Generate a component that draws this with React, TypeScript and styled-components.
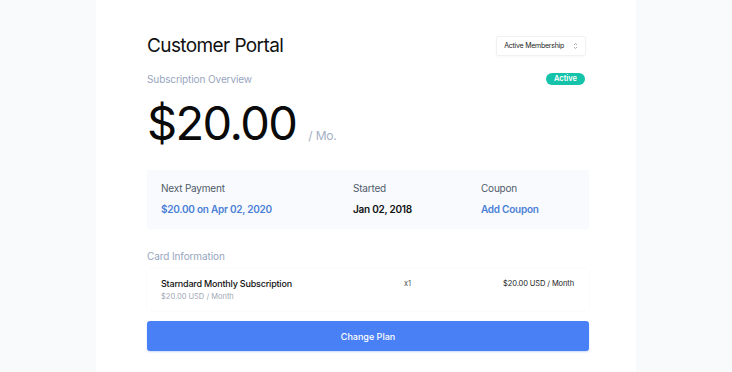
import styled, { createGlobalStyle } from 'styled-components';

const GlobalStyle = createGlobalStyle`
  html, body {
    margin: 0;
    padding: 0;
    background: #f8fafc;
    font-family: Inter, "Noto Sans", sans-serif;
    -webkit-font-smoothing: antialiased;
  }
`;

const Page = styled.div`
  display: flex;
  justify-content: center;
  height: 372px;
  overflow: hidden;
`;

const Panel = styled.main`
  width: 540px;
  margin-right: 96px;
  margin-left: 96px;
  background: #ffffff;
  padding: 34px 47px 0 51px;
  box-sizing: border-box;
  display: flex;
  flex-direction: column;
`;

const Header = styled.header`
  display: flex;
  justify-content: space-between;
  align-items: center;
`;

const Title = styled.h1`
  margin: 0;
  font-size: 19px;
  font-weight: 400;
  color: #111111;
  letter-spacing: -0.6px;
`;

const Select = styled.div`
  display: flex;
  align-items: center;
  gap: 9px;
  height: 18px;
  padding: 0 7px;
  margin-right: 3px;
  border: 1px solid #f0f1f3;
  border-radius: 2px;
  font-size: 7px;
  letter-spacing: -0.25px;
  color: #222;
  box-shadow: 0 1px 2px rgba(0, 0, 0, 0.03);
`;

const OverviewRow = styled.div`
  display: flex;
  justify-content: space-between;
  align-items: center;
  margin-top: 16px;
`;

const Muted = styled.span`
  font-size: 10px;
  letter-spacing: -0.1px;
  color: #98a5c0;
`;

const Badge = styled.span`
  background: #14c3a9;
  color: #fff;
  font-size: 7.5px;
  font-weight: 600;
  padding: 1px 8px 2px;
  border-radius: 8px;
  margin-right: 4px;
`;

const PriceRow = styled.div`
  display: flex;
  align-items: baseline;
  gap: 12px;
  margin-top: 9px;
`;

const Price = styled.div`
  font-size: 47px;
  font-weight: 400;
  color: #0a0a0a;
  letter-spacing: -1.6px;
  line-height: 58px;
`;

const PerMonth = styled.span`
  font-size: 12px;
  letter-spacing: -0.2px;
  color: #a3aec4;
`;

const InfoBox = styled.section`
  display: grid;
  grid-template-columns: 192px 128px 1fr;
  margin-top: 18px;
  background: #f8fafd;
  padding: 12px 14px 13px;
  height: 34px;
  row-gap: 8px;
`;

const Label = styled.div`
  font-size: 10px;
  letter-spacing: -0.2px;
  color: #505a6a;
`;

const Value = styled.div<{ $blue?: boolean }>`
  font-size: 10px;
  font-weight: 600;
  letter-spacing: -0.25px;
  color: ${(p) => (p.$blue ? '#4a7fd6' : '#111')};
`;

const SectionTitle = styled.div`
  margin-top: 21px;
  font-size: 10px;
  letter-spacing: -0.1px;
  color: #98a5c0;
`;

const CardRow = styled.div`
  display: grid;
  grid-template-columns: 243px 1fr auto;
  margin-top: 7px;
  padding: 9px 15px 10px 14px;
  border-radius: 3px;
  box-shadow: 0 0 3px rgba(30, 40, 60, 0.04);
`;

const ItemName = styled.div`
  font-size: 9px;
  font-weight: 500;
  letter-spacing: -0.2px;
  color: #111;
`;

const ItemSub = styled.div`
  font-size: 7.5px;
  color: #a0a7b3;
  margin-top: 3px;
`;

const Qty = styled.div`
  font-size: 7.5px;
  color: #555;
  padding-top: 1px;
`;

const LinePrice = styled.div`
  font-size: 7.5px;
  letter-spacing: -0.1px;
  color: #222;
  text-align: right;
  padding-top: 1px;
`;

const Button = styled.button`
  margin-top: 10px;
  height: 30px;
  width: 100%;
  border: none;
  border-radius: 3px;
  background: #4a80f5;
  color: #fff;
  font-family: inherit;
  font-size: 9px;
  font-weight: 500;
  box-shadow: 0 1px 2px rgba(74, 128, 245, 0.3);
`;

function Chevrons() {
  return (
    <svg width="5" height="8" viewBox="0 0 5 8" fill="none">
      <path d="M1 3 L2.5 1.5 L4 3" stroke="#999" strokeWidth="0.8" />
      <path d="M1 5 L2.5 6.5 L4 5" stroke="#999" strokeWidth="0.8" />
    </svg>
  );
}

export default function App() {
  return (
    <Page>
      <GlobalStyle />
      <Panel>
        <Header>
          <Title>Customer Portal</Title>
          <Select>
            Active Membership
            <Chevrons />
          </Select>
        </Header>

        <OverviewRow>
          <Muted>Subscription Overview</Muted>
          <Badge>Active</Badge>
        </OverviewRow>

        <PriceRow>
          <Price>$20.00</Price>
          <PerMonth>/ Mo.</PerMonth>
        </PriceRow>

        <InfoBox>
          <Label>Next Payment</Label>
          <Label>Started</Label>
          <Label>Coupon</Label>
          <Value $blue>$20.00 on Apr 02, 2020</Value>
          <Value>Jan 02, 2018</Value>
          <Value $blue>Add Coupon</Value>
        </InfoBox>

        <SectionTitle>Card Information</SectionTitle>

        <CardRow>
          <div>
            <ItemName>Starndard Monthly Subscription</ItemName>
            <ItemSub>$20.00 USD / Month</ItemSub>
          </div>
          <Qty>x1</Qty>
          <LinePrice>$20.00 USD / Month</LinePrice>
        </CardRow>

        <Button>Change Plan</Button>
      </Panel>
    </Page>
  );
}
